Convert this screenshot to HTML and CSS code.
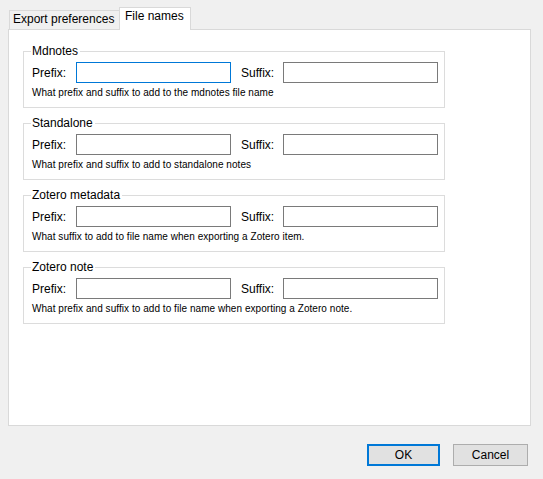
FILE: index.html
```html
<!DOCTYPE html>
<html>
<head>
<meta charset="utf-8">
<link rel="stylesheet" href="styles.css">
</head>
<body>
<div class="window">
  <div class="tabs">
    <div class="tab">Export preferences</div>
    <div class="tab active">File names</div>
  </div>
  <div class="panel">
    <div class="group">
      <div class="legend">Mdnotes</div>
      <div class="row">
        <span class="lbl lbl-prefix">Prefix:</span>
        <input class="field focused" type="text">
        <span class="lbl lbl-suffix">Suffix:</span>
        <input class="field" type="text">
      </div>
      <div class="help">What prefix and suffix to add to the mdnotes file name</div>
    </div>
    <div class="group">
      <div class="legend">Standalone</div>
      <div class="row">
        <span class="lbl lbl-prefix">Prefix:</span>
        <input class="field" type="text">
        <span class="lbl lbl-suffix">Suffix:</span>
        <input class="field" type="text">
      </div>
      <div class="help">What prefix and suffix to add to standalone notes</div>
    </div>
    <div class="group">
      <div class="legend">Zotero metadata</div>
      <div class="row">
        <span class="lbl lbl-prefix">Prefix:</span>
        <input class="field" type="text">
        <span class="lbl lbl-suffix">Suffix:</span>
        <input class="field" type="text">
      </div>
      <div class="help">What suffix to add to file name when exporting a Zotero item.</div>
    </div>
    <div class="group">
      <div class="legend">Zotero note</div>
      <div class="row">
        <span class="lbl lbl-prefix">Prefix:</span>
        <input class="field" type="text">
        <span class="lbl lbl-suffix">Suffix:</span>
        <input class="field" type="text">
      </div>
      <div class="help">What prefix and suffix to add to file name when exporting a Zotero note.</div>
    </div>
  </div>
  <div class="footer">
    <button class="btn btn-default">OK</button>
    <button class="btn">Cancel</button>
  </div>
</div>
</body>
</html>
```

FILE: styles.css
```css
* { box-sizing: border-box; }
html, body {
  margin: 0;
  padding: 0;
  background: #f0f0f0;
  font-family: "Liberation Sans", Arial, sans-serif;
  font-size: 12px;
  color: #000;
}
.window {
  width: 543px;
  height: 479px;
}
.tabs {
  display: flex;
  align-items: flex-end;
  height: 29px;
  padding-left: 9px;
}
.tab {
  height: 19px;
  width: 110px;
  border: 1px solid #d9d9d9;
  border-bottom: none;
  border-right: none;
  background: #f0f0f0;
  padding-left: 3px;
  line-height: 17px;
  white-space: nowrap;
}
.tab.active {
  position: relative;
  z-index: 1;
  height: 23px;
  width: 72px;
  margin-bottom: -1px;
  background: #fff;
  border: 1px solid #d9d9d9;
  border-bottom: none;
  padding-left: 5px;
  line-height: 17px;
}
.panel {
  margin-left: 8px;
  width: 523px;
  height: 397px;
  background: #fff;
  border: 1px solid #d9d9d9;
  padding: 21px 0 0 14px;
  display: flex;
  flex-direction: column;
  gap: 15px;
}
.group {
  position: relative;
  width: 422px;
  border: 1px solid #dcdcdc;
  padding: 10px 6px 8px 8px;
}
.legend {
  position: absolute;
  top: -9px;
  left: 7px;
  background: #fff;
  padding: 0 2px 0 1px;
  line-height: 16px;
  font-size: 12px;
}
.row {
  display: flex;
  align-items: center;
  height: 21px;
}
.lbl {
  white-space: nowrap;
}
.lbl-prefix { width: 44px; }
.lbl-suffix { width: 42px; margin-left: 10px; }
.field {
  width: 155px;
  height: 21px;
  margin: 0;
  border: 1px solid #7a7a7a;
  background: #fff;
  outline: none;
  padding: 0 3px;
  font: inherit;
}
.field.focused {
  border-color: #0078d7;
}
.help {
  margin-top: 4px;
  font-size: 10px;
  line-height: 12px;
  letter-spacing: 0.05px;
  white-space: nowrap;
}
.footer {
  display: flex;
  justify-content: flex-end;
  gap: 13px;
  padding: 18px 15px 0 0;
}
.btn {
  width: 75px;
  height: 22px;
  margin: 0;
  border: 1px solid #adadad;
  background: #e1e1e1;
  font-family: "Liberation Sans", Arial, sans-serif;
  font-size: 12px;
  color: #000;
  padding: 0;
}
.btn-default {
  width: 73px;
  border: 2px solid #0078d7;
}
```
